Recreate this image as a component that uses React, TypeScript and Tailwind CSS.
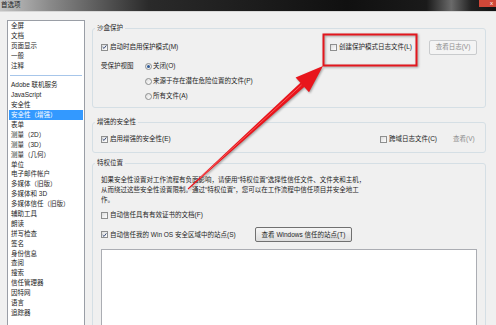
const navItems = [
  '全屏',
  '文档',
  '页面显示',
  '一般',
  '注释',
  '-',
  'Adobe 联机服务',
  'JavaScript',
  '安全性',
  '安全性（增强）',
  '表单',
  '测量（2D）',
  '测量（3D）',
  '测量（几何）',
  '单位',
  '电子邮件帐户',
  '多媒体（旧版）',
  '多媒体和 3D',
  '多媒体信任（旧版）',
  '辅助工具',
  '朗读',
  '拼写检查',
  '签名',
  '身份信息',
  '查阅',
  '搜索',
  '信任管理器',
  '因特网',
  '语言',
  '追踪器',
]

const selected = '安全性（增强）'

function Checkbox({ checked = false, label }: { checked?: boolean; label: string }) {
  return (
    <div className="flex items-center gap-[2px] whitespace-nowrap">
      <span className="flex h-[7px] w-[7px] shrink-0 items-center justify-center border border-[#8e8f8f] bg-gradient-to-br from-[#dcdcdc] to-white">
        {checked && (
          <svg width="6" height="6" viewBox="0 0 6 6">
            <path d="M0.8 3.1 L2.4 4.7 L5.3 1" fill="none" stroke="#3b4f7a" strokeWidth="1.2" />
          </svg>
        )}
      </span>
      <span>{label}</span>
    </div>
  )
}

function Radio({ checked = false, label }: { checked?: boolean; label: string }) {
  return (
    <div className="flex h-[15px] items-center gap-[1px] whitespace-nowrap">
      <span className="flex h-[7px] w-[7px] shrink-0 items-center justify-center rounded-full border border-[#8e8f8f] bg-gradient-to-br from-[#dcdcdc] to-white">
        {checked && <span className="h-[3px] w-[3px] rounded-full bg-[#2e5a96]" />}
      </span>
      <span>{label}</span>
    </div>
  )
}

export default function App() {
  return (
    <div className="relative h-[325px] w-[496px] overflow-hidden bg-[#f0f0f0] font-['Liberation_Sans','Noto_Sans_CJK_SC',sans-serif] text-[6.5px] text-[#1e1e1e]">
      {/* title bar */}
      <div className="flex h-[12px] items-start justify-between border-b border-[#d8d8d8] bg-[linear-gradient(90deg,#c4c4c4_0%,#8a8a8a_10%,#2a2a2a_30%,#101010_70%,#1a1a1a_86%,#6a6a6a_91%,#222_95%,#111_100%)]">
        <span className="ml-[1px] mt-[1px] text-[6.5px] leading-[8px] text-[#222]">首选项</span>
        <span className="flex h-[7px] w-[17px] items-start justify-end bg-[#cf4738] pr-[3px] text-[6px] leading-[6px] text-white">x</span>
      </div>

      <div className="flex pl-[7px]">
        {/* category list */}
        <div className="mt-[8px] h-[320px] w-[78px] shrink-0 border border-[#9a9ea6] bg-white px-[1px]">
          {navItems.map((item, i) =>
            item === '-' ? (
              <div key={i} className="flex h-[9.9px] items-center px-[1px]">
                <div className="h-px w-full bg-[#a7c6ea]" />
              </div>
            ) : (
              <div
                key={i}
                className={
                  item === selected
                    ? 'flex h-[9.9px] items-center whitespace-nowrap bg-[#3399ff] pl-[2px] text-white'
                    : 'flex h-[9.9px] items-center whitespace-nowrap pl-[2px]'
                }
              >
                {item}
              </div>
            )
          )}
        </div>

        {/* settings */}
        <div className="ml-[7px] flex w-[394px] flex-col pt-[12px]">
          <fieldset className="m-0 h-[84px] min-w-0 rounded-[3px] border border-[#d5dfe5] p-0">
            <legend className="ml-[2px] px-[2px] leading-[8px]">沙盒保护</legend>
            <div className="mt-[7px] flex h-[16px] items-center pl-[8px] pr-[8px]">
              <div className="w-[229px]">
                <Checkbox checked label="启动时启用保护模式(M)" />
              </div>
              <Checkbox label="创建保护模式日志文件(L)" />
              <div className="ml-auto flex h-[15px] w-[48px] items-center justify-center rounded-[2px] border border-[#c9cbcd] bg-[#f4f4f4] text-[#8d8d8d]">
                查看日志(V)
              </div>
            </div>
            <div className="mt-[3.5px] flex pl-[8px]">
              <div className="flex h-[15px] w-[44px] items-center">受保护视图</div>
              <div className="flex flex-col">
                <Radio checked label="关闭(O)" />
                <Radio label="来源于存在潜在危险位置的文件(P)" />
                <Radio label="所有文件(A)" />
              </div>
            </div>
          </fieldset>

          <fieldset className="m-0 mt-[10px] h-[35px] min-w-0 rounded-[3px] border border-[#d5dfe5] p-0">
            <legend className="ml-[2px] px-[2px] leading-[8px]">增强的安全性</legend>
            <div className="mt-[5px] flex h-[16px] items-center pl-[8px]">
              <div className="w-[279px]">
                <Checkbox checked label="启用增强的安全性(E)" />
              </div>
              <div className="w-[73px]">
                <Checkbox label="跨域日志文件(C)" />
              </div>
              <span className="text-[#8d8d8d]">查看(V)</span>
            </div>
          </fieldset>

          <fieldset className="m-0 mt-[6px] h-[200px] min-w-0 rounded-[3px] border border-[#d5dfe5] p-0">
            <legend className="ml-[2px] px-[2px] leading-[8px]">特权位置</legend>
            <div className="mt-[8px] pl-[8px] leading-[10px]">
              <div className="whitespace-nowrap">
                如果安全性设置对工作流程有负面影响，请使用“特权位置”选择性信任文件、文件夹和主机，
              </div>
              <div className="whitespace-nowrap">
                从而绕过这些安全性设置限制。通过“特权位置”，您可以在工作流程中信任项目并安全地工
              </div>
              <div>作。</div>
            </div>
            <div className="mt-[3px] flex h-[14px] items-center pl-[8px]">
              <Checkbox label="自动信任具有有效证书的文档(F)" />
            </div>
            <div className="mt-[5px] flex h-[15px] items-center pl-[8px]">
              <div className="w-[154px]">
                <Checkbox checked label="自动信任我的 Win OS 安全区域中的站点(S)" />
              </div>
              <div className="flex h-[15px] w-[97px] items-center justify-center rounded-[2px] border border-[#707070] bg-gradient-to-b from-[#f6f6f6] to-[#dddddd] whitespace-nowrap">
                查看 Windows 信任的站点(T)
              </div>
            </div>
            <div className="ml-[8px] mt-[7px] h-[100px] w-[376px] border border-[#abadb3] bg-white" />
          </fieldset>
        </div>
      </div>

      {/* red annotation */}
      <svg
        className="pointer-events-none absolute left-0 top-0 drop-shadow-[1px_1px_1px_rgba(0,0,0,0.35)]"
        width="496"
        height="325"
        viewBox="0 0 496 325"
      >
        <rect x="323.5" y="34.5" width="93" height="31" fill="none" stroke="#e3161d" strokeWidth="2" />
        <polygon
          points="323,66 309,92.3 304.2,87 188.3,189.4 187.7,188.6 300.4,82.8 295.6,77.5"
          fill="#e8151c"
        />
        <line x1="301.5" y1="85" x2="200" y2="178" stroke="#ff6a6a" strokeWidth="0.8" />
      </svg>
    </div>
  )
}
